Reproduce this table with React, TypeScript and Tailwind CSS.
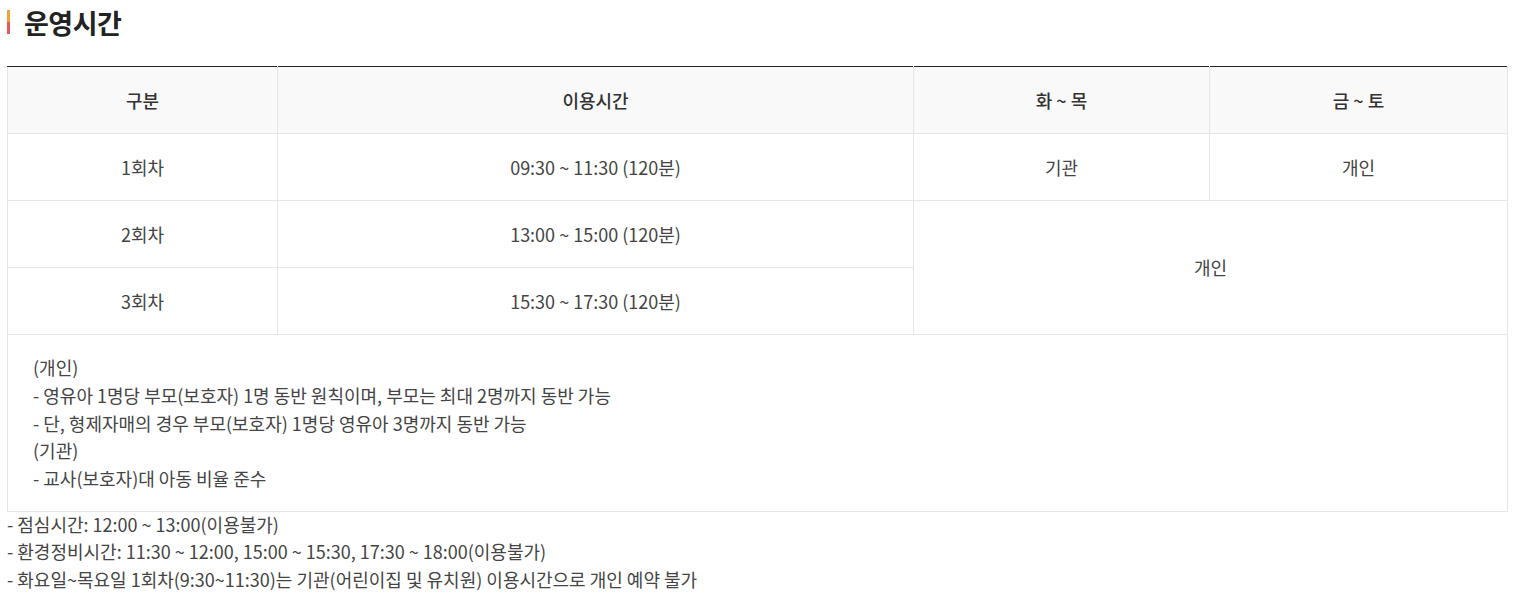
const font = "font-['Noto_Sans_CJK_KR','Noto_Sans',sans-serif]";

const rows = [
  { label: '1회차', time: '09:30 ~ 11:30 (120분)' },
  { label: '2회차', time: '13:00 ~ 15:00 (120분)' },
  { label: '3회차', time: '15:30 ~ 17:30 (120분)' },
];

export default function App() {
  const th = 'h-[67px] bg-[#f9f9f9] border border-[#e6e6e6] border-t-[#222] text-[18px] font-medium text-[#333] text-center';
  const td = 'h-[67px] border border-[#e6e6e6] text-[18px] text-[#444] text-center';

  return (
    <div className={`${font} bg-white px-[7px] pt-[4px] w-[1515px]`}>
      {/* Title */}
      <div className="flex items-center gap-[14px] h-[36px]">
        <span className="flex flex-col w-[3px] h-[24px]">
          <span className="flex-1 bg-[#f2a33a]" />
          <span className="flex-1 bg-[#e8595b]" />
        </span>
        <h2 className="text-[27px] font-bold text-[#222] leading-none tracking-[-0.5px]">운영시간</h2>
      </div>

      {/* Table */}
      <table className="mt-[26px] w-full border-collapse table-fixed">
        <colgroup>
          <col className="w-[270px]" />
          <col className="w-[636px]" />
          <col className="w-[296px]" />
          <col />
        </colgroup>
        <thead>
          <tr>
            <th className={th}>구분</th>
            <th className={th}>이용시간</th>
            <th className={th}>화 ~ 목</th>
            <th className={th}>금 ~ 토</th>
          </tr>
        </thead>
        <tbody>
          <tr>
            <td className={td}>{rows[0].label}</td>
            <td className={td}>{rows[0].time}</td>
            <td className={td}>기관</td>
            <td className={td}>개인</td>
          </tr>
          <tr>
            <td className={td}>{rows[1].label}</td>
            <td className={td}>{rows[1].time}</td>
            <td className={td} colSpan={2} rowSpan={2}>개인</td>
          </tr>
          <tr>
            <td className={td}>{rows[2].label}</td>
            <td className={td}>{rows[2].time}</td>
          </tr>
          <tr>
            <td colSpan={4} className="border border-[#e6e6e6] pl-[25px] pt-[19px] pb-[18px] text-[18px] leading-[27.8px] text-[#444] text-left">
              <p>(개인)</p>
              <p>- 영유아 1명당 부모(보호자) 1명 동반 원칙이며, 부모는 최대 2명까지 동반 가능</p>
              <p>- 단, 형제자매의 경우 부모(보호자) 1명당 영유아 3명까지 동반 가능</p>
              <p>(기관)</p>
              <p>- 교사(보호자)대 아동 비율 준수</p>
            </td>
          </tr>
        </tbody>
      </table>

      {/* Notes */}
      <div className="text-[18px] leading-[27.5px] text-[#444] -mt-[1px]">
        <p>- 점심시간: 12:00 ~ 13:00(이용불가)</p>
        <p>- 환경정비시간: 11:30 ~ 12:00, 15:00 ~ 15:30, 17:30 ~ 18:00(이용불가)</p>
        <p>- 화요일~목요일 1회차(9:30~11:30)는 기관(어린이집 및 유치원) 이용시간으로 개인 예약 불가</p>
      </div>
    </div>
  );
}
